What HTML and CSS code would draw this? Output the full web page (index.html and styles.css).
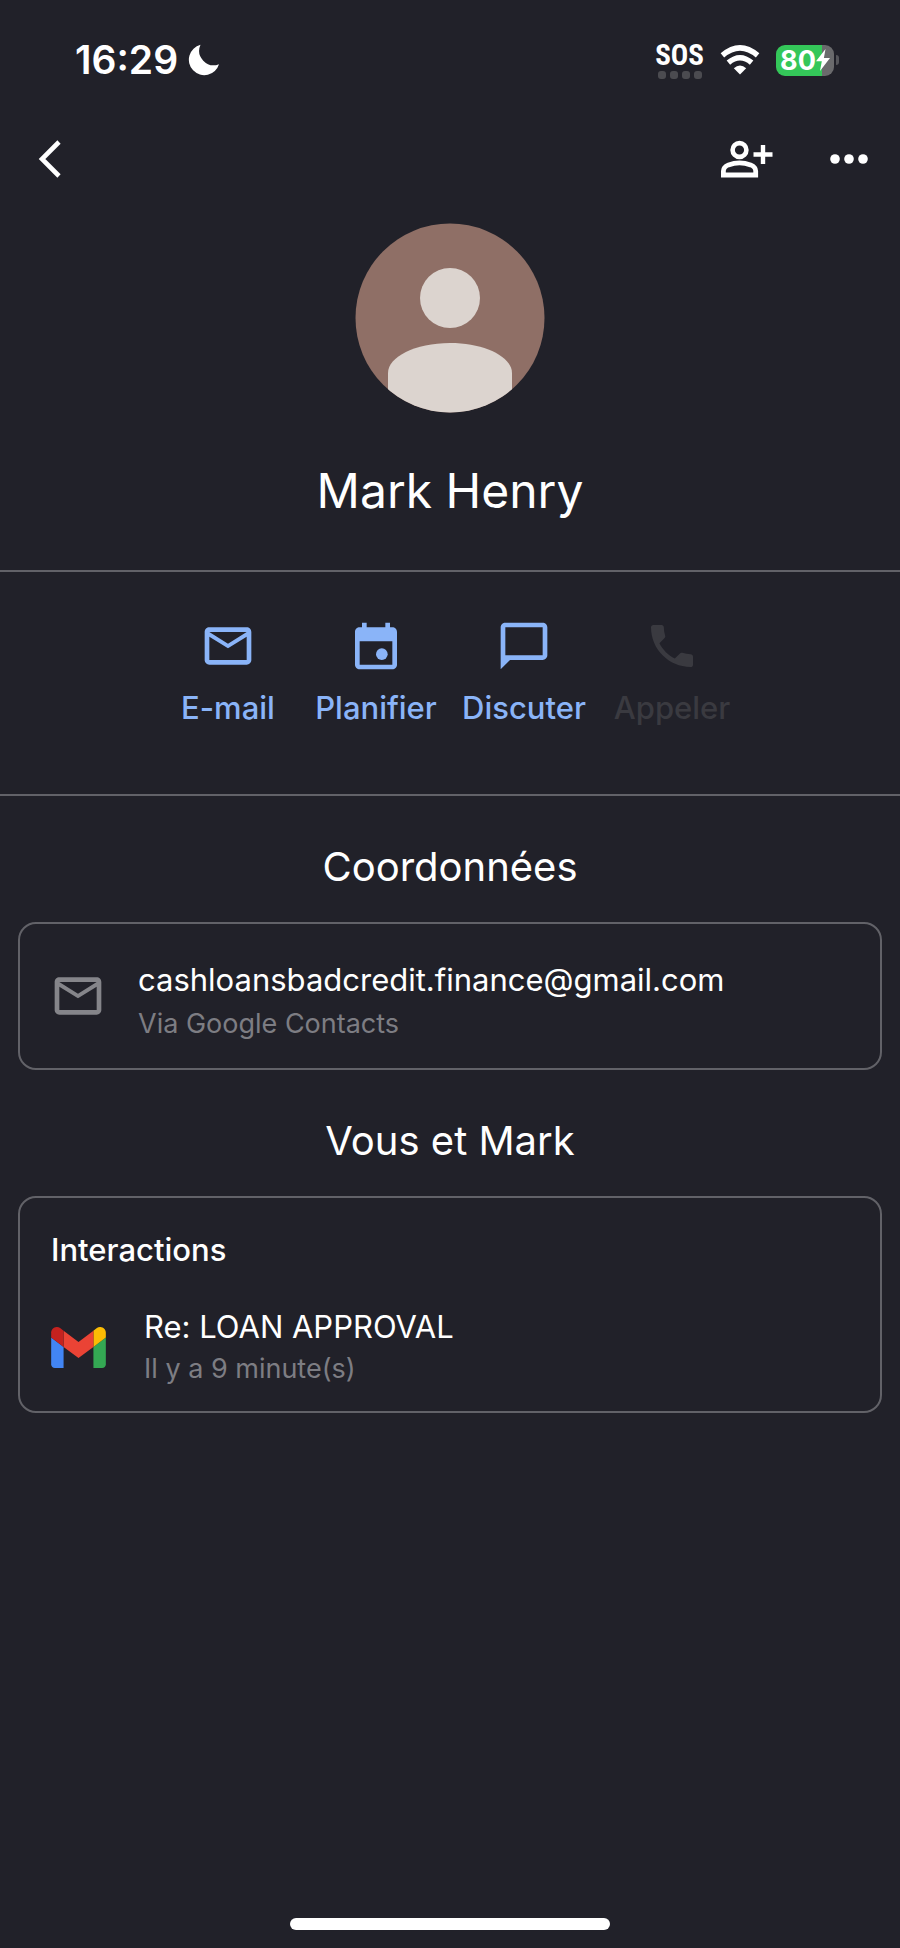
FILE: index.html
```html
<!DOCTYPE html>
<html lang="fr">
<head>
<meta charset="utf-8">
<meta name="viewport" content="width=device-width, initial-scale=1">
<title>Mark Henry</title>
<link rel="stylesheet" href="styles.css">
</head>
<body>
<div class="screen">
  <div class="status">
    <div class="status-left">
      <span class="time">16:29</span>
      <svg class="moon" viewBox="0 0 32 32" aria-hidden="true"><path d="M12.500.8A15.400 15.400 0 1 0 31 20.200A14.500 14.500 0 0 1 12.500.8Z"/></svg>
    </div>
    <div class="status-right">
      <div class="sos">
        <span class="sos-text">SOS</span>
        <span class="sos-dots"><i></i><i></i><i></i><i></i></span>
      </div>
      <svg class="wifi" viewBox="0 0 40 30" aria-hidden="true">
        <path d="M20 29.500L13.800 23.200Q20 17.800 26.200 23.200Z" fill="#fff"/>
        <path d="M8.400 17.600Q20 7.800 31.600 17.600M2.400 10.400Q20-4.600 37.600 10.400" fill="none" stroke="#fff" stroke-width="5.400"/>
      </svg>
      <div class="battery">
        <div class="cell"><span>80</span>
          <svg class="bolt" viewBox="0 0 14 22" aria-hidden="true"><path d="M9.500 0L0 12.200H5.800L4 22L14 9H7.900Z"/></svg>
        </div>
        <i class="tip"></i>
      </div>
    </div>
  </div>

  <nav class="bar">
    <button class="icon-btn back" aria-label="Retour">
      <svg viewBox="0 0 24 38" width="24" height="38"><path d="M21 2L4 19L21 36" fill="none" stroke="#fff" stroke-width="4.600"/></svg>
    </button>
    <div class="bar-end">
      <button class="icon-btn" aria-label="Ajouter aux contacts">
        <svg viewBox="0 0 52 38" width="52" height="38" fill="none" stroke="#fff">
          <circle cx="18.500" cy="10" r="6.900" stroke-width="4.600"/>
          <path d="M2.400 35V31Q2.400 27 7.500 24.900Q18.500 21 29.600 24.900Q34.700 27 34.700 31V35Z" stroke-width="4.800"/>
          <path d="M42 5V24M32.500 14.500H51.500" stroke-width="4.400"/>
        </svg>
      </button>
      <button class="icon-btn" aria-label="Plus d'options">
        <svg viewBox="0 0 38 10" width="38" height="10" fill="#fff"><circle cx="5" cy="5" r="4.800"/><circle cx="19" cy="5" r="4.800"/><circle cx="33" cy="5" r="4.800"/></svg>
      </button>
    </div>
  </nav>

  <header class="profile">
    <svg class="avatar" viewBox="0 0 190 190" role="img" aria-label="Photo de profil">
      <clipPath id="disc"><circle cx="95" cy="95" r="94.500"/></clipPath>
      <circle cx="95" cy="95" r="94.500" fill="#8f6f66"/>
      <g clip-path="url(#disc)" fill="#dcd4cf"><circle cx="95" cy="75" r="30"/><path d="M33 190V150C33 134 60 120 95 120S157 134 157 150V190Z"/></g>
    </svg>
    <h1 class="name">Mark Henry</h1>
  </header>

  <div class="actions">
    <button class="action">
      <svg viewBox="0 0 24 24"><path d="M22 6c0-1.100-.9-2-2-2H4c-1.100 0-2 .9-2 2v12c0 1.100.9 2 2 2h16c1.100 0 2-.9 2-2V6zm-2 0l-8 5-8-5h16zm0 12H4V8l8 5 8-5v10z"/></svg>
      <span>E-mail</span>
    </button>
    <button class="action">
      <svg viewBox="0 0 24 24"><path d="M19 4h-1V2h-2v2H8V2H6v2H5c-1.110 0-2 .9-2 2v14c0 1.100.89 2 2 2h14c1.100 0 2-.9 2-2V6c0-1.100-.9-2-2-2zm0 16H5V10h14v10z"/><circle cx="14.500" cy="15.500" r="2.500"/></svg>
      <span>Planifier</span>
    </button>
    <button class="action">
      <svg viewBox="0 0 24 24"><path d="M20 2H4c-1.100 0-2 .9-2 2v18l4-4h14c1.100 0 2-.9 2-2V4c0-1.100-.9-2-2-2zm0 14H4V4h16v12z"/></svg>
      <span>Discuter</span>
    </button>
    <button class="action" disabled>
      <svg viewBox="0 0 24 24"><path d="M6.540 3H4c-.55 0-1 .45-1 1 0 9.390 7.610 17 17 17 .55 0 1-.45 1-1v-3.490c0-.55-.45-1-1-1-1.240 0-2.450-.2-3.570-.57-.35-.11-.74-.03-1.020.24l-2.200 2.200c-2.830-1.440-5.150-3.750-6.590-6.580l2.200-2.210c.28-.27.36-.66.25-1.010C8.700 6.450 8.500 5.250 8.500 4c0-.55-.45-1-1-1z"/></svg>
      <span>Appeler</span>
    </button>
  </div>

  <main class="content">
    <section class="section">
      <h2 class="heading">Coordonnées</h2>
      <div class="card contact">
        <svg class="mail" viewBox="0 0 24 24" aria-hidden="true"><path d="M22 6c0-1.100-.9-2-2-2H4c-1.100 0-2 .9-2 2v12c0 1.100.9 2 2 2h16c1.100 0 2-.9 2-2V6zm-2 0l-8 5-8-5h16zm0 12H4V8l8 5 8-5v10z"/></svg>
        <div class="lines">
          <a class="primary" href="mailto:cashloansbadcredit.finance@gmail.com">cashloansbadcredit.finance@gmail.com</a>
          <span class="secondary">Via Google Contacts</span>
        </div>
      </div>
    </section>
    <section class="section">
      <h2 class="heading">Vous et Mark</h2>
      <div class="card interactions">
        <h3 class="subheading">Interactions</h3>
        <div class="row">
          <svg class="gmail" viewBox="52 42 88 66" role="img" aria-label="Gmail">
            <path fill="#4285f4" d="M58 108h14V74L52 59v43c0 3.320 2.690 6 6 6"/>
            <path fill="#34a853" d="M120 108h14c3.320 0 6-2.690 6-6V59l-20 15"/>
            <path fill="#fbbc04" d="M120 48v26l20-15v-8c0-7.420-8.470-11.650-14.400-7.200"/>
            <path fill="#ea4335" d="M72 74V48l24 18 24-18v26L96 92"/>
            <path fill="#c5221f" d="M52 51v8l20 15V48l-5.600-4.200c-5.940-4.450-14.400-.22-14.400 7.200"/>
          </svg>
          <div class="lines">
            <span class="primary">Re: LOAN APPROVAL</span>
            <span class="secondary">Il y a 9 minute(s)</span>
          </div>
        </div>
      </div>
    </section>
  </main>
  <div class="home"></div>
</div>
</body>
</html>
```

FILE: styles.css
```css
* { box-sizing: border-box; }
body {
  margin: 0;
  background: #212129;
  color: #fff;
  font-family: Inter, "Liberation Sans", sans-serif;
}
h1, h2, h3 { margin: 0; font-weight: 400; }
button { border: 0; padding: 0; background: none; color: inherit; font: inherit; }
svg { display: block; flex: none; }

.screen { min-height: 100vh; display: flex; flex-direction: column; }

.status { display: flex; justify-content: space-between; align-items: center; height: 120px; padding: 0 61px 0 75px; }
.status-left, .status-right { display: flex; align-items: center; }
.status-left { gap: 10px; }
.time { font-size: 39px; font-weight: 600; line-height: 48px; }
.moon { width: 32px; height: 32px; fill: #fff; }
.status-right { gap: 16px; }
.sos { display: flex; flex-direction: column; align-items: center; gap: 4px; padding-top: 2px; }
.sos-text { font: 700 29px/24px "Roboto Condensed", "Liberation Sans Narrow", sans-serif; }
.sos-dots { display: flex; gap: 4px; }
.sos-dots i { width: 8px; height: 8px; border-radius: 3px; background: #4b4b50; }
.wifi { width: 40px; height: 30px; }
.battery { display: flex; align-items: center; gap: 2px; }
.cell {
  display: flex; align-items: center; justify-content: center;
  width: 58px; height: 31px; border-radius: 9px;
  background: linear-gradient(90deg, #34c759 80%, #6a6a6c 80%);
  font-size: 27px; font-weight: 700; line-height: 31px;
}
.bolt { width: 14px; height: 22px; fill: #fff; }
.tip { width: 3px; height: 10px; border-radius: 0 3px 3px 0; background: #55555a; }

.bar { display: flex; justify-content: space-between; align-items: center; height: 78px; padding: 0 32px 0 38px; }
.bar-end { display: flex; align-items: center; gap: 57px; }

.profile { display: flex; flex-direction: column; align-items: center; gap: 46px; padding: 25px 24px 47px; }
.avatar { width: 190px; height: 190px; }
.name { font-size: 48px; line-height: 64px; text-align: center; }

.actions {
  display: flex; justify-content: center;
  padding: 46px 0 66px;
  border: solid #626268; border-width: 2px 0;
}
.action { display: flex; flex-direction: column; align-items: center; gap: 14px; width: 148px; color: #8ab4f8; font-size: 31px; font-weight: 500; line-height: 40px; }
.action svg { width: 56px; height: 56px; fill: currentColor; }
.action:disabled { color: #3a3a40; }

.content { flex: 1; padding: 0 18px; }
.section { padding-top: 46px; }
.heading { font-size: 40px; line-height: 50px; text-align: center; }
.card { margin-top: 30px; border: 2px solid #626268; border-radius: 18px; }
.contact { display: flex; align-items: flex-start; gap: 32px; padding: 34px 30px 24px; }
.contact .lines { gap: 2px; }
.mail { width: 56px; height: 56px; margin-top: 10px; fill: #85858a; }
.lines { display: flex; flex-direction: column; min-width: 0; }
.primary { color: #fff; text-decoration: none; font-size: 31px; line-height: 44px; overflow-wrap: anywhere; }
.secondary { color: #7d7d83; font-size: 27px; line-height: 40px; }
.interactions { padding: 30px 31px 22px; }
.subheading { font-size: 31px; font-weight: 500; line-height: 44px; }
.row { display: flex; align-items: center; gap: 38px; padding-top: 33px; }
.gmail { width: 55px; height: 41px; }

.home { align-self: center; width: 320px; height: 12px; margin-bottom: 18px; border-radius: 6px; background: #fff; }
```
